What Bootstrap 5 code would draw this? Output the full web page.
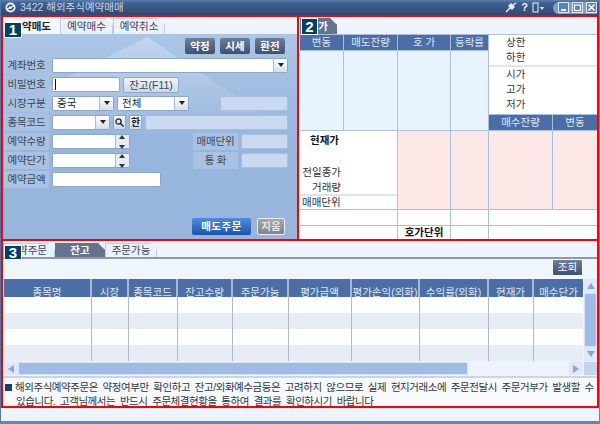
<!DOCTYPE html>
<html lang="ko">
<head>
<meta charset="utf-8">
<title>3422 해외주식예약매매</title>
<link href="https://cdn.jsdelivr.net/npm/bootstrap@5.3.0/dist/css/bootstrap.min.css" rel="stylesheet">
<style>
html,body{margin:0;width:600px;height:424px;overflow:hidden;background:#4a72a8;}
body{font-family:"Liberation Sans","Noto Sans CJK KR",sans-serif;font-size:10.5px;line-height:1;color:#3c4650;}
.appwin{width:600px;height:424px;background:#eef4fc;border-left:1px solid #4a78b0;border-right:1px solid #5f87b8;border-bottom:3px solid #5f87b8;overflow:hidden;}
.titlebar{height:15px;margin:0 -1px;padding:0 3px 0 5px;background:linear-gradient(#5d80b0 0,#3f6090 3px,#2d4a74 15px);color:#c9d6e8;font-size:10.5px;flex:none;}
.logo{width:11px;height:11px;margin-right:4px;}
.tico{width:12px;height:11px;}
.ticons{gap:3px;}
.qmark{font-size:11px;color:#eef3fa;width:9px;text-align:center;}
.winbtns{background:#7f9fcb;border-radius:6px 0 0 6px;padding-left:5px;height:12px;margin-left:6px;gap:3px;}
.wbtn{width:11px;height:11px;border:1px solid #dfe8f5;background:#5e83b8;display:flex;}
.wbtn svg{width:100%;height:100%;}
.toprow{height:226px;flex:none;}
.panel-a{width:298px;border:2px solid #f00;}
.panel-b{width:300px;border:2px solid #f00;border-left:0;padding-left:1px;}
.panel-c{width:598px;height:167px;border:2px solid #f00;border-top:0;flex:none;}
.tabline{height:17px;padding-top:1px;}
.wtab{height:16px;line-height:15px;padding:0;background:#e9f1fb;border:1px solid #b9cde6;border-bottom:0;clip-path:polygon(0 0,calc(100% - 7px) 0,100% 7px,100% 100%,0 100%);white-space:nowrap;color:#3c4650;text-align:center;}
.wtab-on{background:#f3f8ff;font-weight:700;border-color:#f3f8ff;color:#222;}
.wtab-dark{background:#64748e;color:#fff;font-weight:700;border-color:#64748e;}
.tabw1{width:57px;text-align:right;padding-right:8px;}
.tabw2{width:53px;}
.tabw3{width:52px;}
.numtag{position:absolute;background:#003f66;border:1px solid #fff;color:#fff;font-weight:700;font-size:15px;text-align:center;font-family:"Liberation Sans",sans-serif;z-index:3;}
.tag1{left:1px;top:5px;width:18px;height:16px;line-height:14px;}
.tag2{left:2px;top:1px;width:17px;height:17px;line-height:15px;}
.tag3{left:1px;top:4px;width:18px;height:15px;line-height:13px;}
.formarea{height:205px;padding:4px 9px 4px 1px;background:linear-gradient(#adc6e6,#98b6dc 50%);overflow:hidden;}
.formarea::after{content:"";position:absolute;inset:0;background:linear-gradient(#c4d6ef,#98b6dc 50%);clip-path:polygon(49% 1.5%,100% 50%,0 50%,0 37%);}
.formarea>*{position:relative;z-index:1;}
.topbtns{height:16px;margin-bottom:4px;gap:5px;padding-right:3px;}
.darkbtn{height:16px;width:30px;padding:0;border:0;border-radius:2px;background:linear-gradient(#6d7f9b,#40516f);color:#fff;font-size:10.5px;font-weight:700;line-height:16px;}
.frow{height:15px;margin-bottom:4px;gap:3px;}
.flabel{width:45px;height:17px;line-height:17px;text-align:center;background:#a9c2e4;color:#3c4650;flex:none;letter-spacing:-.2px;}
.fbox{height:15px;background:#fff;border:1px solid #8ea6c6;border-radius:2px;flex:none;line-height:13px;color:#222;}
.fdis{height:15px;background:#c9d9ef;border:1px solid #a9bedb;border-radius:2px;flex:none;}
.w46{width:47px}.w68{width:68px}.w62{width:62px}.w72{width:72px}.w78{width:78px}.w109{width:109px}.w58{width:58px}
.caretbox{width:14px;height:100%;background:linear-gradient(#fff,#d5deea);border-left:1px solid #a9bbd5;}
.caretbox::after{content:"";border:3.5px solid transparent;border-top:4px solid #222;margin-top:4px;}
.spin{width:14px;height:100%;background:#e6edf6;border-left:1px solid #a9bbd5;}
.spin i{height:6.5px;position:relative;display:block;}
.spin i::after{content:"";position:absolute;left:3px;border:3.5px solid transparent;}
.spin .su::after{top:-3px;border-bottom:4px solid #333;}
.spin .sd::after{top:3px;border-top:4px solid #333;}
.caretmark{width:1px;height:11px;background:#111;margin:1px 0 0 2px;}
.litebtn{height:16px;width:56px;padding:0;background:linear-gradient(#f1f6fc,#cbd9ea);border:1px solid #8ea6c6;border-radius:2px;color:#3c4650;font-size:10.5px;line-height:14px;}
.minib{width:13px;height:15px;background:linear-gradient(#f1f6fc,#cbd9ea);border:1px solid #8ea6c6;border-radius:1px;font-size:10px;font-weight:700;color:#222;flex:none;line-height:13px;}
.sellrow{gap:6px;padding-right:3px;}
.sellbtn{width:59px;height:17px;padding:0;border:0;border-radius:2px;background:linear-gradient(#4f8be0,#1a56b0);color:#fff;font-weight:700;font-size:10.5px;letter-spacing:.5px;line-height:17px;}
.clearbtn{width:28px;height:17px;padding:0;border:1px solid #eef;border-radius:2px;background:linear-gradient(#a5a8aa,#7f8485);color:#e8e8e8;font-size:10.5px;font-weight:700;line-height:15px;}
.hoga{display:grid;grid-template-columns:43px 53px 52px 37px 63px 44px;grid-template-rows:15px 63px 15px 78px 15px 13px;gap:1px;background:#a9bfdc;border-top:1px solid #a9bfdc;width:297px;}
.hh{background:#4a6ea5;color:#dfe8f5;display:flex;align-items:center;justify-content:center;}
.hb{background:#e8f4fd;}
.hr{background:#fde8e8;}
.hw{background:#fff;}
.span-u{grid-row:2/4;}
.quote{grid-column:5/7;grid-row:1/3;background:#fff;padding-left:17px;color:#333;}
.quote div{height:15px;line-height:15px;}
.quote .qsep{height:2px;background:#dfe6f0;margin-left:-17px;}
.cur{grid-column:1/3;grid-row:4;color:#333;}
.r1{grid-column:1/3;}
.r3{grid-column:5/7;}
.curb{font-weight:700;color:#111;margin:4px 0 0 10px;}
.curl{position:absolute;right:56px;white-space:nowrap;}
.l1{top:36px;}.l2{top:51px;}
.unit{position:absolute;left:0;right:0;top:63px;height:15px;border-top:2px solid #dde4f0;line-height:13px;padding-left:2px;}
.gotext{font-weight:700;color:#111;line-height:13px;}
.ctabs{height:16px;margin-top:2px;border-bottom:2px solid #8e98a8;}
.ctabs .wtab{height:14px;line-height:13px;}
.ct0{width:37px;text-align:right;padding-right:8px;}
.ct1{width:52px;text-align:right;padding-right:7px;}
.ct2{width:50px;}
.ct3{width:52px;}
.qrow{height:20px;padding:1px 15px 0 0;background:#f0f6fe;}
.qbtn{width:29px;height:15px;padding:0;border:0;border-radius:1px;background:linear-gradient(#6d7f9b,#40516f);color:#fff;font-size:10.5px;line-height:15px;}
.gridwrap{height:83px;padding-left:1px;}
.gridtbl{width:579px;table-layout:fixed;margin:0;border-collapse:collapse;}
.gridtbl th{height:18px;padding:0;background:#4a6ea5;color:#dfe8f5;font-weight:400;text-align:center;border-right:2px solid #a8b9d3;border-bottom:0;font-size:10.5px;white-space:nowrap;}
.gridtbl td{height:16px;padding:0;border-right:1.5px solid #a8b9d3;border-bottom:0;background:#fff;}
.gridtbl tr.alt td{background:#e8edf5;}
.gridtbl th:last-child,.gridtbl td:last-child{border-right:0;}
.c1{width:87px}.c2{width:37px}.c3{width:49px}.c4{width:55px}.c5{width:56px}.c6{width:63px}.c7{width:68px}.c8{width:69px}.c9{width:45px}.c10{width:50px}
.vbar{width:13px;height:82px;margin-left:1px;background:#e8f0fb;}
.sbtn{height:14px;flex:none;background:#dfe8f5;}
.sup::after,.sdn::after,.slf::after,.srt::after{content:"";border:4px solid transparent;}
.sup::after{border-bottom:6px solid #8ba7cf;margin-top:-4px;}
.sdn::after{border-top:6px solid #8ba7cf;margin-top:4px;}
.slf::after{border-right:6px solid #8ba7cf;margin-left:-4px;}
.srt::after{border-left:6px solid #8ba7cf;margin-left:4px;}
.vthumb{background:#a0bce6;border:1px solid #d8e4f5;}
.hbarrow{height:13px;padding-left:1px;}
.hbar{width:579px;background:#edf4fd;}
.hbar .sbtn{width:14px;height:13px;}
.hthumb{width:450px;background:#a0bce6;border:1px solid #d8e4f5;}
.hcorner{width:13px;height:13px;background:#c2d4ee;margin-left:1px;}
.notice{border-top:2px solid #c9d5e6;margin-top:1px;padding:2px 0 0 2px;line-height:14px;letter-spacing:-.45px;word-spacing:2.2px;white-space:nowrap;color:#333;background:#f6faff;height:30px;}
.bullet{display:inline-block;width:7px;height:7px;background:#1f3c70;margin-right:3px;}
.note2{padding-left:11px;}
</style>
</head>
<body>
<div class="appwin d-flex flex-column">
  <div class="titlebar d-flex align-items-center">
    <svg class="logo" viewBox="0 0 12 12"><circle cx="6" cy="6" r="5.5" fill="#e8eef6"/><path d="M3 6.5a3 3 0 0 1 5-2.2M9 5.5a3 3 0 0 1-5 2.2" fill="none" stroke="#2d4a74" stroke-width="1.6"/></svg>
    <span>3422 해외주식예약매매</span>
    <div class="ms-auto d-flex align-items-center ticons">
      <svg class="tico" viewBox="0 0 12 11"><path d="M1 10 5 6M4 4l3 3 2-2-3-3zM8 3l3-2" stroke="#eef3fa" stroke-width="1.4" fill="#eef3fa"/></svg>
      <span class="fw-bold qmark">?</span>
      <svg class="tico" viewBox="0 0 12 11"><rect x="1" y="1" width="5" height="9" fill="none" stroke="#eef3fa"/><path d="M8 5h4l-2 3z" fill="#eef3fa"/></svg>
      <div class="winbtns d-flex align-items-center">
        <div class="wbtn"><svg viewBox="0 0 9 9"><rect x="2" y="6" width="5" height="2" fill="#fff"/></svg></div>
        <div class="wbtn"><svg viewBox="0 0 9 9"><rect x="1.5" y="2" width="6" height="5.5" fill="none" stroke="#fff" stroke-width="1.2"/></svg></div>
        <div class="wbtn"><svg viewBox="0 0 9 9"><path d="M1.5 1.5l6 6M7.5 1.5l-6 6" stroke="#fff" stroke-width="1.7"/></svg></div>
      </div>
    </div>
  </div>
  <div class="toprow d-flex">
    <section class="panel-a position-relative">
      <div class="numtag tag1">1</div>
      <div class="tabline d-flex">
        <div class="wtab wtab-on tabw1">약매도</div>
        <div class="wtab tabw2">예약매수</div>
        <div class="wtab tabw3">예약취소</div>
      </div>
      <div class="formarea position-relative d-flex flex-column">
        <div class="topbtns d-flex justify-content-end">
          <button class="btn darkbtn">약정</button><button class="btn darkbtn">시세</button><button class="btn darkbtn">환전</button>
        </div>
        <div class="frow d-flex align-items-center"><span class="flabel">계좌번호</span><div class="fbox flex-fill d-flex justify-content-end"><span class="caretbox d-flex justify-content-center"></span></div></div>
        <div class="frow d-flex align-items-center"><span class="flabel">비밀번호</span><div class="fbox w68"><div class="caretmark"></div></div><button class="btn litebtn">잔고(F11)</button></div>
        <div class="frow d-flex align-items-center"><span class="flabel">시장구분</span><div class="fbox w62 d-flex justify-content-between ps-1"><span>중국</span><span class="caretbox d-flex justify-content-center"></span></div><div class="fbox w72 d-flex justify-content-between ps-1"><span>전체</span><span class="caretbox d-flex justify-content-center"></span></div><div class="fdis w68 ms-auto"></div></div>
        <div class="frow d-flex align-items-center"><span class="flabel">종목코드</span><div class="fbox w58 d-flex justify-content-end"><span class="caretbox d-flex justify-content-center"></span></div>
          <button class="btn p-0 minib d-flex align-items-center justify-content-center"><svg width="9" height="9" viewBox="0 0 9 9"><circle cx="3.5" cy="3.5" r="2.6" fill="none" stroke="#222" stroke-width="1.3"/><path d="M5.5 5.5 8.5 8.5" stroke="#222" stroke-width="1.5"/></svg></button>
          <button class="btn p-0 minib">한</button><div class="fdis flex-fill"></div></div>
        <div class="frow d-flex align-items-center"><span class="flabel">예약수량</span><div class="fbox w78 d-flex justify-content-end"><span class="spin"><i class="su"></i><i class="sd"></i></span></div><span class="flabel ms-auto">매매단위</span><div class="fdis w46"></div></div>
        <div class="frow d-flex align-items-center"><span class="flabel">예약단가</span><div class="fbox w78 d-flex justify-content-end"><span class="spin"><i class="su"></i><i class="sd"></i></span></div><span class="flabel ms-auto">통 화</span><div class="fdis w46"></div></div>
        <div class="frow d-flex align-items-center"><span class="flabel">예약금액</span><div class="fbox w109"></div></div>
        <div class="sellrow mt-auto d-flex justify-content-end">
          <button class="btn sellbtn">매도주문</button><button class="btn clearbtn">지움</button>
        </div>
      </div>
    </section>
    <section class="panel-b position-relative">
      <div class="numtag tag2">2</div>
      <div class="tabline d-flex"><div class="wtab wtab-dark ct0">가</div></div>
      <div class="hoga">
        <div class="hh">변동</div><div class="hh">매도잔량</div><div class="hh">호 가</div><div class="hh">등락률</div>
        <div class="quote"><div>상한</div><div>하한</div><div class="qsep"></div><div>시가</div><div>고가</div><div>저가</div></div>
        <div class="hb span-u"></div><div class="hb span-u"></div><div class="hb span-u"></div><div class="hb span-u"></div>
        <div class="hh">매수잔량</div><div class="hh">변동</div>
        <div class="cur hw position-relative"><div class="curb">현재가</div><span class="curl l1">전일종가</span><span class="curl l2">거래량</span><div class="unit">매매단위</div></div>
        <div class="hr"></div><div class="hr"></div><div class="hr"></div><div class="hr"></div>
        <div class="hw r1"></div><div class="hw"></div><div class="hw"></div><div class="hw r3"></div>
        <div class="hw r1"></div><div class="hw text-center gotext">호가단위</div><div class="hw"></div><div class="hw r3"></div>
      </div>
    </section>
  </div>
  <section class="panel-c position-relative">
    <div class="numtag tag3">3</div>
    <div class="ctabs d-flex">
      <div class="wtab ct1">약주문</div><div class="wtab wtab-dark ct2">잔고</div><div class="wtab ct3">주문가능</div>
    </div>
    <div class="qrow d-flex justify-content-end"><button class="btn qbtn">조회</button></div>
    <div class="gridwrap d-flex">
      <div>
        <table class="table gridtbl">
          <colgroup><col class="c1"><col class="c2"><col class="c3"><col class="c4"><col class="c5"><col class="c6"><col class="c7"><col class="c8"><col class="c9"><col class="c10"></colgroup>
          <thead><tr><th>종목명</th><th>시장</th><th>종목코드</th><th>잔고수량</th><th>주문가능</th><th>평가금액</th><th>평가손익(외화)</th><th>수익률(외화)</th><th>현재가</th><th>매수단가</th></tr></thead>
          <tbody>
            <tr><td></td><td></td><td></td><td></td><td></td><td></td><td></td><td></td><td></td><td></td></tr>
            <tr class="alt"><td></td><td></td><td></td><td></td><td></td><td></td><td></td><td></td><td></td><td></td></tr>
            <tr><td></td><td></td><td></td><td></td><td></td><td></td><td></td><td></td><td></td><td></td></tr>
            <tr class="alt"><td></td><td></td><td></td><td></td><td></td><td></td><td></td><td></td><td></td><td></td></tr>
          </tbody>
        </table>
      </div>
      <div class="vbar d-flex flex-column">
        <div class="sbtn sup d-flex align-items-center justify-content-center"></div>
        <div class="vthumb flex-fill"></div>
        <div class="sbtn sdn d-flex align-items-center justify-content-center"></div>
      </div>
    </div>
    <div class="hbarrow d-flex">
      <div class="hbar d-flex">
        <div class="sbtn slf d-flex align-items-center justify-content-center"></div>
        <div class="hthumb"></div>
        <div class="sbtn srt d-flex align-items-center justify-content-center ms-auto"></div>
      </div>
      <div class="hcorner"></div>
    </div>
    <div class="notice">
      <div><span class="bullet"></span>해외주식예약주문은 약정여부만 확인하고 잔고/외화예수금등은 고려하지 않으므로 실제 현지거래소에 주문전달시 주문거부가 발생할 수</div>
      <div class="note2">있습니다. 고객님께서는 반드시 주문체결현황을 통하여 결과를 확인하시기 바랍니다</div>
    </div>
  </section>
</div>
<script src="https://cdn.jsdelivr.net/npm/bootstrap@5.3.0/dist/js/bootstrap.bundle.min.js"></script>
</body>
</html>
